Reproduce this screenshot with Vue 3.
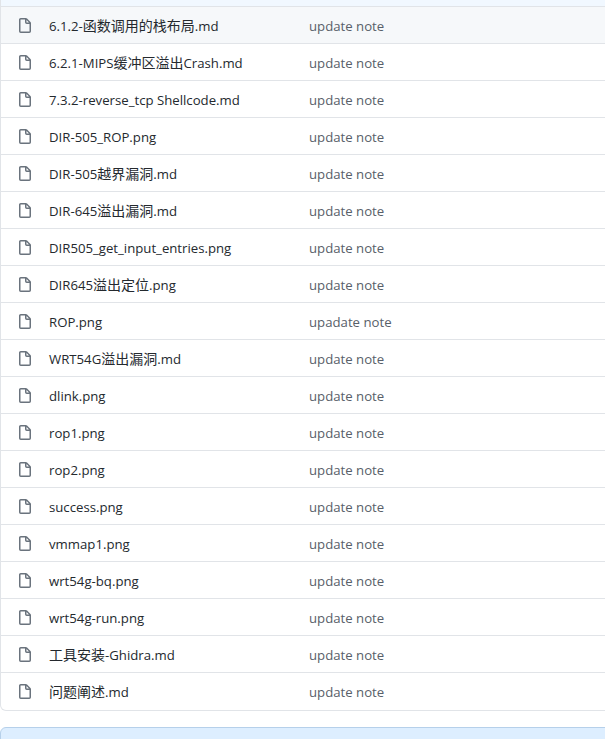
<script setup>
const data = [
  ['6.1.2-函数调用的栈布局.md', 'update note'],
  ['6.2.1-MIPS缓冲区溢出Crash.md', 'update note'],
  ['7.3.2-reverse_tcp Shellcode.md', 'update note'],
  ['DIR-505_ROP.png', 'update note'],
  ['DIR-505越界漏洞.md', 'update note'],
  ['DIR-645溢出漏洞.md', 'update note'],
  ['DIR505_get_input_entries.png', 'update note'],
  ['DIR645溢出定位.png', 'update note'],
  ['ROP.png', 'upadate note'],
  ['WRT54G溢出漏洞.md', 'update note'],
  ['dlink.png', 'update note'],
  ['rop1.png', 'update note'],
  ['rop2.png', 'update note'],
  ['success.png', 'update note'],
  ['vmmap1.png', 'update note'],
  ['wrt54g-bq.png', 'update note'],
  ['wrt54g-run.png', 'update note'],
  ['工具安装-Ghidra.md', 'update note'],
  ['问题阐述.md', 'update note'],
]
const cjk = /^[\u4e00-\u9fff]/
const rows = data.map(([name, msg]) => ({
  name,
  msg,
  parts: name.split(/([\u4e00-\u9fff]+)/).filter(Boolean).map((text) => ({ text, cjk: cjk.test(text) })),
}))
</script>

<template>
  <div class="page">
    <div class="box">
      <div class="strip"></div>
      <div v-for="(r, i) in rows" :key="r.name" class="row" :class="{ hover: i === 0 }">
        <svg class="icon" viewBox="0 0 16 16" width="16" height="16">
          <path fill="#6a737d" fill-rule="evenodd" d="M3.75 1.5a.25.25 0 00-.25.25v11.5c0 .138.112.25.25.25h8.5a.25.25 0 00.25-.25V6H9.75A1.75 1.75 0 018 4.25V1.5H3.75zm5.75.56v2.19c0 .138.112.25.25.25h2.19L9.5 2.06zM2 1.75C2 .784 2.784 0 3.75 0h5.086c.464 0 .909.184 1.237.513l3.414 3.414c.329.328.513.773.513 1.237v8.086A1.75 1.75 0 0112.25 15h-8.5A1.75 1.75 0 012 13.25V1.75z"/>
        </svg>
        <span class="name"><span v-for="(p, j) in r.parts" :key="j" :class="{ cjk: p.cjk }">{{ p.text }}</span></span>
        <span class="msg">{{ r.msg }}</span>
      </div>
    </div>
    <div class="next"></div>
  </div>
</template>

<style>
html, body { margin: 0; overflow: hidden; background: #fff; }
</style>

<style scoped>
.page {
  width: 605px;
  height: 739px;
  overflow: hidden;
  font-family: "Open Sans", "Noto Sans CJK SC", sans-serif;
  font-size: 13.2px;
  line-height: 20px;
}
.box {
  width: 640px;
  box-sizing: border-box;
  border: 1px solid #e1e4e8;
  border-top: 0;
  border-radius: 0 0 6px 6px;
}
.strip { height: 6px; background: #f1f8ff; }
.row {
  height: 34px;
  padding: 2px 0 0 16px;
  display: flex;
  align-items: center;
  border-top: 1px solid #e1e4e8;
}
.row:last-child { padding-bottom: 1px; }
.hover { background: #f6f8fa; }
.icon { flex: none; margin-right: 16px; }
.name { flex: none; width: 260px; color: #24292e; white-space: nowrap; }
.cjk { font-size: 14px; }
.msg { color: #586069; white-space: nowrap; }
.next {
  width: 640px;
  height: 40px;
  box-sizing: border-box;
  margin-top: 16px;
  background: #ddeeff;
  border: 1px solid #b6d0ea;
  border-radius: 6px;
}
</style>
